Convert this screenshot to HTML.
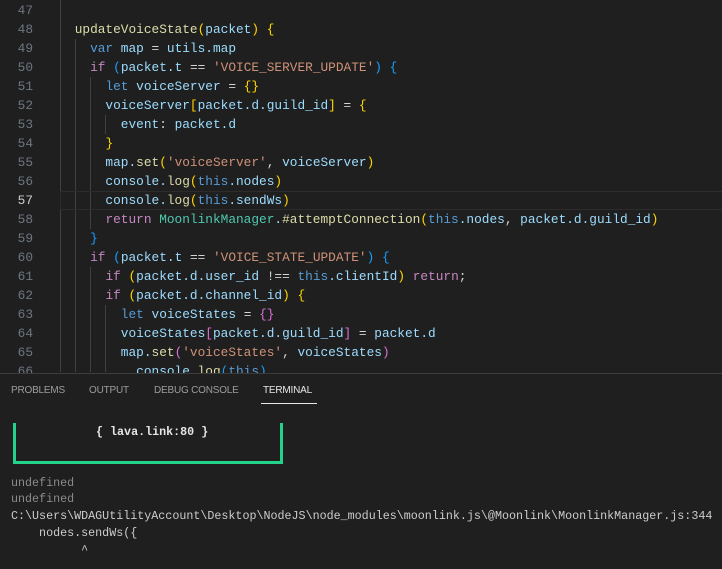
<!DOCTYPE html><html><head><style>
body{margin:0;width:722px;height:568px;background:#1f1f1f;overflow:hidden;position:relative;font-family:"Liberation Mono",monospace}
.ln{position:absolute;left:0;width:33px;text-align:right;color:#6e7681;font-size:12.8px;line-height:19px}
.c{position:absolute;left:44px;font-size:12.8px;line-height:19px;white-space:pre;color:#9cdcfe}
.g{position:absolute;width:1px;background:#404040}
.v{color:#9cdcfe}.f{color:#dcdcaa}.k{color:#569cd6}.p{color:#c586c0}.s{color:#ce9178}.t{color:#4ec9b0}.y{color:#ffd700}.m{color:#da70d6}.b{color:#179fff}.w{color:#d4d4d4}
.tab{position:absolute;top:385px;font-family:"Liberation Sans",sans-serif;font-size:10px;letter-spacing:-0.2px;color:#9d9d9d}
.term{position:absolute;left:11px;font-size:11.7px;line-height:16px;white-space:pre;color:#cccccc}
</style></head><body>
<div class="g" style="left:60px;top:0;height:372px"></div>
<div class="g" style="left:75px;top:39px;height:333px"></div>
<div class="g" style="left:90px;top:77px;height:152px"></div>
<div class="g" style="left:105px;top:115px;height:19px"></div>
<div class="g" style="left:90px;top:267px;height:105px"></div>
<div class="g" style="left:105px;top:305px;height:67px"></div>
<div style="position:absolute;left:60px;top:191px;width:662px;height:17px;border:1px solid #2c2c2c"></div>
<div class="ln" style="top:1px">47</div><div class="ln" style="top:20px">48</div><div class="ln" style="top:39px">49</div><div class="ln" style="top:58px">50</div><div class="ln" style="top:77px">51</div><div class="ln" style="top:96px">52</div><div class="ln" style="top:115px">53</div><div class="ln" style="top:134px">54</div><div class="ln" style="top:153px">55</div><div class="ln" style="top:172px">56</div><div class="ln" style="top:191px;color:#cccccc">57</div><div class="ln" style="top:210px">58</div><div class="ln" style="top:229px">59</div><div class="ln" style="top:248px">60</div><div class="ln" style="top:267px">61</div><div class="ln" style="top:286px">62</div><div class="ln" style="top:305px">63</div><div class="ln" style="top:324px">64</div><div class="ln" style="top:343px">65</div><div class="ln" style="top:362px">66</div>
<div class="c" style="top:20px">    <span class="f">updateVoiceState</span><span class="y">(</span>packet<span class="y">)</span> <span class="y">{</span></div>
<div class="c" style="top:39px">      <span class="k">var</span> map <span class="w">=</span> utils.map</div>
<div class="c" style="top:58px">      <span class="p">if</span> <span class="b">(</span>packet.t <span class="w">==</span> <span class="s">'VOICE_SERVER_UPDATE'</span><span class="b">)</span> <span class="b">{</span></div>
<div class="c" style="top:77px">        <span class="k">let</span> voiceServer <span class="w">=</span> <span class="y">{}</span></div>
<div class="c" style="top:96px">        voiceServer<span class="y">[</span>packet.d.guild_id<span class="y">]</span> <span class="w">=</span> <span class="y">{</span></div>
<div class="c" style="top:115px">          event<span class="w">:</span> packet.d</div>
<div class="c" style="top:134px">        <span class="y">}</span></div>
<div class="c" style="top:153px">        map.<span class="f">set</span><span class="y">(</span><span class="s">'voiceServer'</span><span class="w">,</span> voiceServer<span class="y">)</span></div>
<div class="c" style="top:172px">        console.<span class="f">log</span><span class="y">(</span><span class="k">this</span>.nodes<span class="y">)</span></div>
<div class="c" style="top:191px">        console.<span class="f">log</span><span class="y">(</span><span class="k">this</span>.sendWs<span class="y">)</span></div>
<div class="c" style="top:210px">        <span class="p">return</span> <span class="t">MoonlinkManager</span>.<span class="f">#attemptConnection</span><span class="y">(</span><span class="k">this</span>.nodes<span class="w">,</span> packet.d.guild_id<span class="y">)</span></div>
<div class="c" style="top:229px">      <span class="b">}</span></div>
<div class="c" style="top:248px">      <span class="p">if</span> <span class="b">(</span>packet.t <span class="w">==</span> <span class="s">'VOICE_STATE_UPDATE'</span><span class="b">)</span> <span class="b">{</span></div>
<div class="c" style="top:267px">        <span class="p">if</span> <span class="y">(</span>packet.d.user_id <span class="w">!==</span> <span class="k">this</span>.clientId<span class="y">)</span> <span class="p">return</span><span class="w">;</span></div>
<div class="c" style="top:286px">        <span class="p">if</span> <span class="y">(</span>packet.d.channel_id<span class="y">)</span> <span class="y">{</span></div>
<div class="c" style="top:305px">          <span class="k">let</span> voiceStates <span class="w">=</span> <span class="m">{}</span></div>
<div class="c" style="top:324px">          voiceStates<span class="m">[</span>packet.d.guild_id<span class="m">]</span> <span class="w">=</span> packet.d</div>
<div class="c" style="top:343px">          map.<span class="f">set</span><span class="m">(</span><span class="s">'voiceStates'</span><span class="w">,</span> voiceStates<span class="m">)</span></div>
<div class="c" style="top:362px">            console.<span class="f">log</span><span class="b">(</span><span class="k">this</span><span class="b">)</span></div>
<div style="position:absolute;left:0;top:373px;width:722px;height:195px;background:#1f1f1f;border-top:1px solid #3c3c3c"></div>
<div class="tab" style="left:11px">PROBLEMS</div>
<div class="tab" style="left:89px">OUTPUT</div>
<div class="tab" style="left:154px">DEBUG CONSOLE</div>
<div class="tab" style="left:263px;color:#e7e7e7">TERMINAL</div>
<div style="position:absolute;left:261px;top:403px;width:56px;height:1px;background:#e7e7e7"></div>
<div style="position:absolute;left:13px;top:423px;width:264px;height:38px;border:3px solid #23d18b;border-top:none"></div>
<div class="term" style="top:424px;left:96px;color:#e5e5e5;font-weight:bold">{ lava.link:80 }</div>
<div class="term" style="top:475px;color:#8a8a8a">undefined</div>
<div class="term" style="top:491px;color:#8a8a8a">undefined</div>
<div class="term" style="top:508px">C:\Users\WDAGUtilityAccount\Desktop\NodeJS\node_modules\moonlink.js\@Moonlink\MoonlinkManager.js:344</div>
<div class="term" style="top:525px">    nodes.sendWs({</div>
<div class="term" style="top:542px">          ^</div>
</body></html>
